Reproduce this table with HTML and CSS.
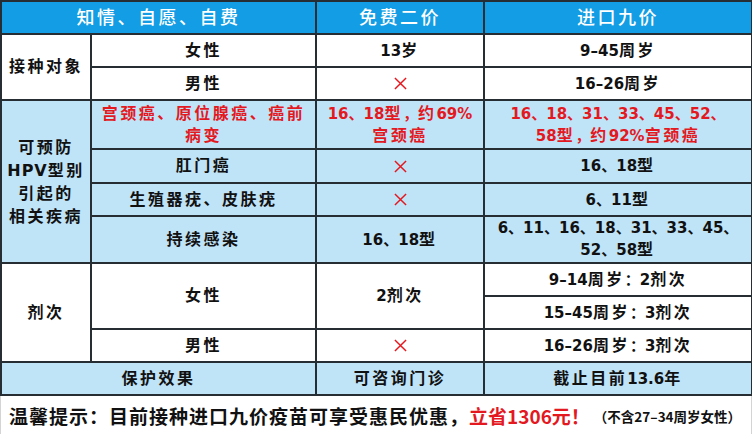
FILE: index.html
```html
<!DOCTYPE html>
<html lang="zh">
<head>
<meta charset="utf-8">
<link rel="stylesheet" href="styles.css">
</head>
<body>
<div class="page">
  <table class="hpv">
    <colgroup>
      <col class="c1"><col class="c2"><col class="c3"><col class="c4">
    </colgroup>
    <tr class="head">
      <th colspan="2">知情、自愿、自费</th>
      <th>免费二价</th>
      <th>进口九价</th>
    </tr>
    <tr class="r33">
      <td rowspan="2" class="cn">接种对象</td>
      <td class="cn">女性</td>
      <td>13<span class="h">岁</span></td>
      <td>9–45<span class="h">周岁</span></td>
    </tr>
    <tr class="r33">
      <td class="cn">男性</td>
      <td><svg class="x" viewBox="0 0 14 14"><path d="M1 1L13 13M13 1L1 13"/></svg></td>
      <td>16–26<span class="h">周岁</span></td>
    </tr>
    <tr class="blue r49">
      <td rowspan="4" class="cn side">可预防<br><span class="lat">HPV</span>型别<br>引起的<br>相关疾病</td>
      <td class="cn red two">宫颈癌、原位腺癌、癌前<br>病变</td>
      <td class="red two">16、18<span class="h">型</span>，<span class="h">约</span>69%<br><span class="h">宫颈癌</span></td>
      <td class="red two">16、18、31、33、45、52、<br>58<span class="h">型</span>，<span class="h">约</span>92%<span class="h">宫颈癌</span></td>
    </tr>
    <tr class="blue r34">
      <td class="cn">肛门癌</td>
      <td><svg class="x" viewBox="0 0 14 14"><path d="M1 1L13 13M13 1L1 13"/></svg></td>
      <td>16、18<span class="h">型</span></td>
    </tr>
    <tr class="blue r33">
      <td class="cn">生殖器疣、皮肤疣</td>
      <td><svg class="x" viewBox="0 0 14 14"><path d="M1 1L13 13M13 1L1 13"/></svg></td>
      <td>6、11<span class="h">型</span></td>
    </tr>
    <tr class="blue r47">
      <td class="cn">持续感染</td>
      <td>16、18<span class="h">型</span></td>
      <td class="two2">6、11、16、18、31、33、45、<br>52、58<span class="h">型</span></td>
    </tr>
    <tr class="r33">
      <td rowspan="3" class="cn">剂次</td>
      <td rowspan="2" class="cn">女性</td>
      <td rowspan="2">2<span class="h">剂次</span></td>
      <td>9–14<span class="h">周岁</span>：2<span class="h">剂次</span></td>
    </tr>
    <tr class="r33">
      <td>15–45<span class="h">周岁</span>：3<span class="h">剂次</span></td>
    </tr>
    <tr class="r33">
      <td class="cn">男性</td>
      <td><svg class="x" viewBox="0 0 14 14"><path d="M1 1L13 13M13 1L1 13"/></svg></td>
      <td>16–26<span class="h">周岁</span>：3<span class="h">剂次</span></td>
    </tr>
    <tr class="blue r33">
      <td colspan="2" class="cn">保护效果</td>
      <td class="cn">可咨询门诊</td>
      <td><span class="h">截止目前</span>13.6<span class="h">年</span></td>
    </tr>
  </table>
  <div class="tip">
    <span class="tip-main">温馨提示：目前接种进口九价疫苗可享受惠民优惠，</span><span class="tip-red">立省1306元！</span><span class="tip-small">（不含27–34周岁女性）</span>
  </div>
</div>
</body>
</html>
```

FILE: styles.css
```css
html, body {
  margin: 0;
  padding: 0;
  background: #ffffff;
}

.page {
  width: 752px;
  height: 434px;
  overflow: hidden;
  font-family: "DejaVu Sans", "Noto Sans CJK SC", sans-serif;
  color: #111111;
}

.hpv {
  width: 751px;
  table-layout: fixed;
  border-collapse: collapse;
  border: 2px solid #1e2a33;
}

.c1 { width: 90px; }
.c2 { width: 225px; }
.c3 { width: 168px; }
.c4 { width: 268px; }

.hpv th,
.hpv td {
  border: 2px solid #262e33;
  padding: 0;
  text-align: center;
  vertical-align: middle;
  font-weight: 700;
  overflow: hidden;
}

.hpv td {
  font-size: 15px;
  letter-spacing: 0;
  line-height: 22px;
  white-space: nowrap;
}

.head {
  height: 33px;
  background: #129de4;
}

.head th {
  color: #ffffff;
  font-size: 18px;
  letter-spacing: 2.5px;
  font-weight: 500;
  line-height: 22px;
}

.r33 { height: 33px; }
.r34 { height: 34px; }
.r47 { height: 47px; }
.r49 { height: 49px; }

.blue { background: #bfe3f7; }

.cn {
  font-size: 16px !important;
  letter-spacing: 2.5px !important;
}

.h {
  font-size: 16px;
  letter-spacing: 2.5px;
}

.side {
  line-height: 23px !important;
  white-space: normal !important;
}

.lat {
  letter-spacing: 1px;
}

.two {
  line-height: 22px !important;
}

.two2 {
  line-height: 21px !important;
}

.red { color: #e3191f; }

.x {
  width: 13px;
  height: 13px;
  display: block;
  margin: 0 auto;
  fill: none;
  stroke: #e3191f;
  stroke-width: 1.6;
}

.tip {
  height: 40px;
  display: flex;
  align-items: center;
  padding-left: 8px;
  box-sizing: border-box;
  border: 1px solid #d4d4d4;
  border-top: none;
  font-family: "Noto Sans CJK SC", sans-serif;
  font-size: 19px;
  font-weight: 700;
  white-space: nowrap;
}

.tip-main {
  letter-spacing: 1px;
}

.tip-red {
  color: #e3191f;
  letter-spacing: 0;
}

.tip-small {
  font-size: 13.5px;
  margin-left: 4px;
  letter-spacing: 0;
}
```
